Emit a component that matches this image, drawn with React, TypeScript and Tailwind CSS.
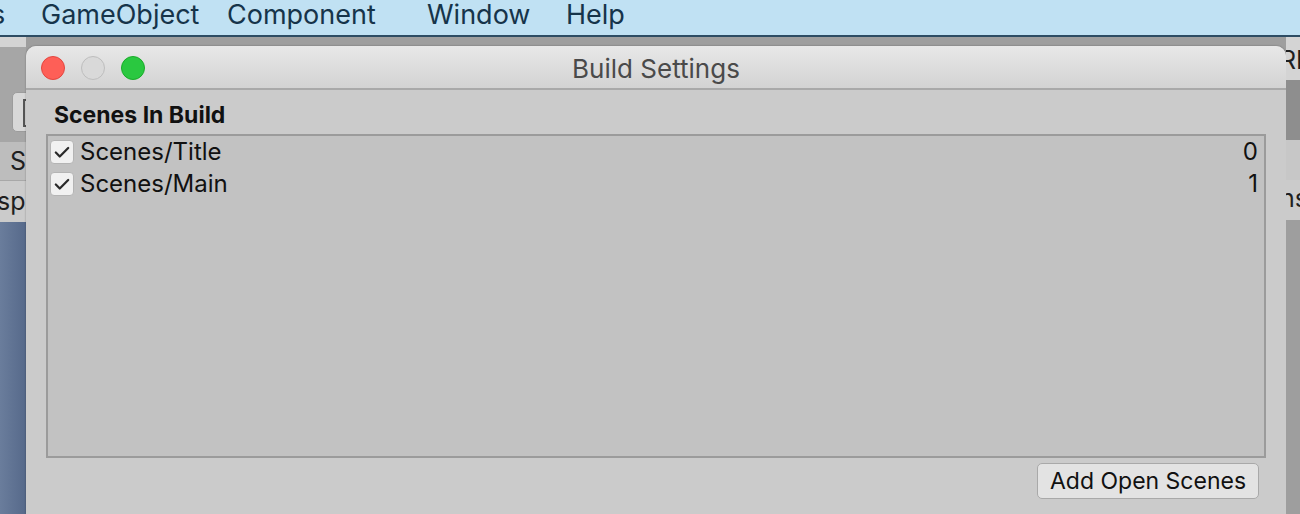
const font = "font-['Inter','Liberation_Sans',sans-serif]";

const Check = () => (
  <div className="w-[24px] h-[24px] rounded-[4px] bg-[#f1f1f1] border border-[#b4b4b4] flex items-center justify-center shrink-0">
    <svg width="18" height="18" viewBox="0 0 16 16" fill="none">
      <path d="M2.5 8.5 L6 12 L13.5 4.5" stroke="#2b2b2b" strokeWidth="2" strokeLinecap="round" strokeLinejoin="round" />
    </svg>
  </div>
);

const scenes = [
  { name: "Scenes/Title", idx: 0 },
  { name: "Scenes/Main", idx: 1 },
];

export default function App() {
  return (
    <div className={`w-[1300px] h-[514px] overflow-hidden flex flex-col bg-[#9e9e9e] ${font}`}>
      {/* menu bar */}
      <div className="h-[37px] shrink-0 bg-[#c0e1f3] border-b-2 border-[#2d4c63] flex items-start pt-[1px] text-[27px] leading-[28px] text-[#16344a] whitespace-nowrap">
        <span className="ml-[-9px] w-[50px]">s</span>
        <span className="w-[186px]">GameObject</span>
        <span className="w-[200px]">Component</span>
        <span className="w-[139px]">Window</span>
        <span>Help</span>
      </div>

      <div className="flex-1 flex min-h-0">
        {/* editor strip left */}
        <div className="w-[26px] shrink-0 flex flex-col overflow-hidden">
          <div className="h-[10px] bg-[#d4d4d4]" />
          <div className="h-[95px] bg-[#a6a6a6] pt-[45px] pl-[12px]">
            <div className="w-[30px] h-[40px] rounded-[5px] bg-[#d8d8d8] border border-[#9c9c9c] pl-[10px] pt-[6px]">
              <div className="w-[12px] h-[28px] border-2 border-[#555] border-r-0" />
            </div>
          </div>
          <div className="h-[38px] bg-[#bdbdbd] text-[25px] text-[#1f1f1f] pl-[10px] leading-[38px]">S</div>
          <div className="h-[42px] bg-[#cbcbcb] border-t border-[#a8a8a8] text-[25px] text-[#1f1f1f] leading-[40px] whitespace-nowrap ml-[-3px]">spl</div>
          <div className="flex-1 bg-gradient-to-r from-[#6a7d9c] to-[#56698a]" />
        </div>

        {/* build settings window */}
        <div className="flex-1 mt-[9px] flex flex-col rounded-t-[10px] overflow-hidden bg-[#cbcbcb] shadow-[0_0_2px_rgba(0,0,0,0.35)]">
          <div className="h-[44px] shrink-0 bg-gradient-to-b from-[#e8e8e8] to-[#d3d3d3] border-b-2 border-[#a9a9a9] relative flex items-center justify-center pt-[3px]">
            <div className="absolute left-[15px] top-[10px] flex gap-[16px]">
              <div className="w-[24px] h-[24px] rounded-full bg-[#fe5f57] border border-[#e2463f]" />
              <div className="w-[24px] h-[24px] rounded-full bg-[#d9d9d9] border border-[#bdbdbd]" />
              <div className="w-[24px] h-[24px] rounded-full bg-[#2ac840] border border-[#1aab29]" />
            </div>
            <span className="text-[26px] text-[#4a4a4a]">Build Settings</span>
          </div>

          <div className="flex-1 flex flex-col px-[20px] pt-[11px]">
            <div className="text-[23px] font-bold text-[#111] pl-[8px] leading-[28px]">Scenes In Build</div>
            <div className="mt-[5px] h-[324px] border-2 border-[#9b9b9b] bg-[#c2c2c2] pl-[2px] pr-[6px]">
              {scenes.map((s) => (
                <div key={s.name} className="h-[32px] flex items-center text-[24px] text-[#111]">
                  <Check />
                  <span className="ml-[6px] flex-1">{s.name}</span>
                  <span>{s.idx}</span>
                </div>
              ))}
            </div>
            <div className="flex justify-end mt-[5px] pr-[7px]">
              <button className="h-[36px] w-[222px] rounded-[5px] bg-[#e3e3e3] border border-[#a9a9a9] text-[23px] text-[#111]">
                Add Open Scenes
              </button>
            </div>
          </div>
        </div>

        {/* editor strip right */}
        <div className="w-[14px] shrink-0 flex flex-col overflow-hidden">
          <div className="h-[43px] bg-[#d4d4d4] text-[25px] text-[#1f1f1f] leading-[46px] whitespace-nowrap ml-[-6px]">RE</div>
          <div className="h-[60px] bg-[#8e8e8e]" />
          <div className="h-[40px] bg-[#c7c7c7]" />
          <div className="h-[40px] bg-[#cbcbcb] text-[25px] text-[#1f1f1f] leading-[36px] whitespace-nowrap ml-[-6px]">ns</div>
          <div className="flex-1 bg-[#9e9e9e]" />
        </div>
      </div>
    </div>
  );
}
